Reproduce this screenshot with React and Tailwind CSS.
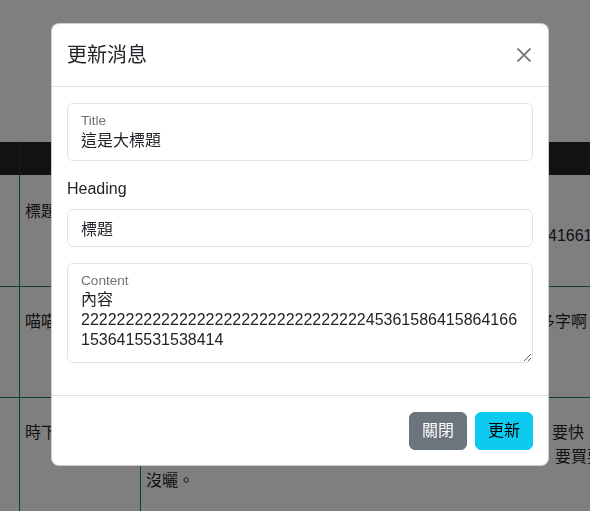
import React from 'react';

const font = "font-['Liberation_Sans','Noto_Sans_CJK_TC',sans-serif]";

const rows = [
    { h: 'h-[112px]', pt: 'pt-[25px]', name: '標題', lines: [['', ''], ['41661', 'pl-[402px]']] },
    { h: 'h-[111px]', pt: 'pt-[23px]', name: '喵喵', lines: [['很多字啊', 'pl-[377px]']] },
    { h: 'h-[120px]', pt: 'pt-[23px]', name: '時下', lines: [['要快，', 'pl-[406px]'], ['要買要', 'pl-[409px]'], ['沒曬。', '']] },
];

const BackgroundTable = () => {
    return (
        <div className="pt-[142px] w-[700px]">
            {/* table head */}
            <div className="flex h-[33px] bg-[#212529]">
                <div className="w-[20px] shrink-0 border-r border-[#32383e]"></div>
                <div className="w-[121px] shrink-0 border-r border-[#32383e]"></div>
                <div className="flex-1"></div>
            </div>
            {rows.map((row, i) => (
                <div key={i} className={`flex ${row.h} ${i < 2 ? 'border-b' : ''} border-[#198754]`}>
                    <div className="w-[20px] shrink-0 border-r border-[#198754]"></div>
                    <div className={`w-[121px] shrink-0 border-r border-[#198754] px-[5px] ${row.pt} leading-6`}>{row.name}</div>
                    <div className={`flex-1 min-w-0 px-[5px] ${row.pt} leading-6 whitespace-nowrap`}>
                        {row.lines.map(([text, pad], li) => (
                            <div key={li} className={`h-6 ${pad}`}>{text}</div>
                        ))}
                    </div>
                </div>
            ))}
        </div>
    )
}

const App = () => {
    const content = '內容\n' + '2'.repeat(32) + '45361586415864166\n1536415531538414';

    return (
        <div className={`relative h-[511px] overflow-hidden bg-white text-[#212529] text-base ${font}`}>
            <BackgroundTable />

            {/* backdrop + modal */}
            <div className="fixed inset-0 bg-black/50">
                <div className="ml-[51px] mt-[23px] w-[498px] bg-white rounded-lg border border-black/20 flex flex-col">
                    {/* Header */}
                    <div className="flex items-center justify-between p-4 pl-[15px] border-b border-[#dee2e6]">
                        <h5 className="text-[20px] leading-[30px] font-normal">更新消息</h5>
                        <svg width="16" height="16" viewBox="0 0 16 16" className="opacity-50">
                            <path d="M1.5 1.5 L14.5 14.5 M14.5 1.5 L1.5 14.5" stroke="#000" strokeWidth="1.8" />
                        </svg>
                    </div>

                    {/* Body */}
                    <div className="px-[15px] py-4">
                        <div className="mb-4 h-[58px] rounded-md border border-[#dee2e6] px-[13px] pt-[8px]">
                            <div className="text-[13.6px] leading-[17px] text-[#212529]/65">Title</div>
                            <input readOnly value="這是大標題" className="w-full h-6 leading-6 bg-transparent outline-none" />
                        </div>

                        <div className="mb-2 leading-6">Heading</div>
                        <input readOnly value="標題" className="mb-4 block w-full h-[38px] rounded-md border border-[#dee2e6] px-[13px] leading-6 outline-none" />

                        <div className="relative mb-4">
                            <textarea
                                readOnly
                                value={content}
                                className="block w-full h-[100px] rounded-md border border-[#dee2e6] px-[13px] pt-[26px] pb-[8px] leading-5 overflow-hidden outline-none resize-y"
                            />
                            <div className="absolute left-[14px] top-[9px] text-[13.6px] leading-[17px] text-[#212529]/65">Content</div>
                        </div>
                    </div>

                    {/* Footer */}
                    <div className="flex justify-end gap-2 border-t border-[#dee2e6] pt-4 pb-[15px] pr-[15px]">
                        <button className="h-[38px] px-3 rounded-md border border-[#6c757d] bg-[#6c757d] text-white leading-6">關閉</button>
                        <button className="h-[38px] px-3 rounded-md border border-[#0dcaf0] bg-[#0dcaf0] text-black leading-6">更新</button>
                    </div>
                </div>
            </div>
        </div>
    )
}

export default App;
